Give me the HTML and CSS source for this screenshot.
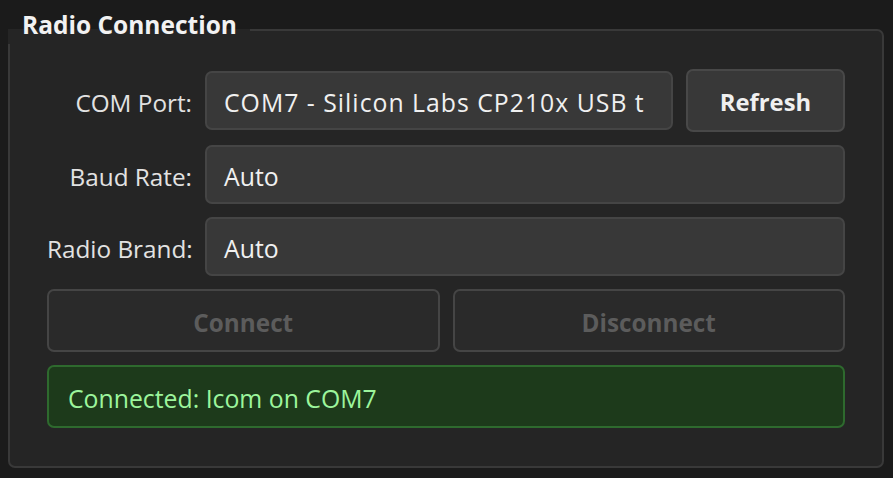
FILE: index.html
```html
<!DOCTYPE html>
<html lang="en">
<head>
<meta charset="utf-8">
<title>Radio Connection</title>
<link rel="stylesheet" href="styles.css">
</head>
<body>
  <section class="group">
    <h2 class="group-title">Radio Connection</h2>
    <div class="form">
      <label class="label">COM Port:</label>
      <div class="field-row">
        <div class="combo combo-port">COM7 - Silicon Labs CP210x USB t</div>
        <button class="btn btn-refresh" type="button">Refresh</button>
      </div>
      <label class="label">Baud Rate:</label>
      <div class="combo">Auto</div>
      <label class="label">Radio Brand:</label>
      <div class="combo">Auto</div>
      <div class="actions">
        <button class="btn btn-disabled" type="button" disabled>Connect</button>
        <button class="btn btn-disabled" type="button" disabled>Disconnect</button>
      </div>
      <div class="status">Connected: Icom on COM7</div>
    </div>
  </section>
</body>
</html>
```

FILE: styles.css
```css
html, body {
  margin: 0;
  padding: 0;
}
body {
  background: #1b1b1b;
  font-family: "Open Sans", "Noto Sans", "DejaVu Sans", sans-serif;
  color: #f0f0f0;
  padding: 29px 9px 10px 8px;
  box-sizing: border-box;
  width: 893px;
  height: 478px;
}
.group {
  position: relative;
  border: 2px solid #393939;
  border-radius: 7px;
  background: #252525;
  padding: 38px 37px 38px 37px;
}
.group-title {
  position: absolute;
  left: -2px;
  top: -18px;
  margin: 0;
  padding: 0 13px 7px 14px;
  font-size: 24.5px;
  line-height: 24px;
  font-weight: 700;
  color: #f2f2f2;
  border-top-left-radius: 7px;
  background: linear-gradient(to bottom, transparent 16px, #252525 16px);
}
.form {
  display: grid;
  grid-template-columns: 145px 1fr;
  column-gap: 13px;
  row-gap: 13px;
  align-items: center;
}
.label {
  text-align: right;
  font-size: 24.3px;
  color: #e2e2e2;
  white-space: nowrap;
  padding-top: 3px;
}
.field-row {
  display: flex;
  align-items: center;
  gap: 13px;
}
.combo {
  flex: 1;
  min-width: 0;
  height: 59px;
  box-sizing: border-box;
  display: flex;
  align-items: center;
  padding: 3px 0 0 17px;
  background: #383838;
  border: 2px solid #454545;
  border-radius: 7px;
  font-size: 24.8px;
  color: #f0f0f0;
  white-space: nowrap;
  overflow: hidden;
}
.combo-port {
  letter-spacing: 1px;
}
.btn {
  height: 63px;
  box-sizing: border-box;
  border-radius: 7px;
  font-family: inherit;
  font-size: 24.3px;
  font-weight: 700;
  padding: 3px 0 0 0;
}
.btn-refresh {
  width: 159px;
  flex: none;
  background: #383838;
  border: 2px solid #484848;
  color: #f0f0f0;
  font-size: 23.8px;
}
.actions {
  grid-column: 1 / 3;
  display: grid;
  grid-template-columns: 1fr 1fr;
  gap: 13px;
}
.btn-disabled {
  background: #2a2a2a;
  border: 2px solid #454545;
  color: #5c5c5c;
}
.status {
  grid-column: 1 / 3;
  height: 63px;
  box-sizing: border-box;
  display: flex;
  align-items: center;
  padding: 3px 0 0 19px;
  background: #1d3a1b;
  border: 2px solid #2e6a2e;
  border-radius: 7px;
  font-size: 24.8px;
  color: #9cf59c;
}
```
